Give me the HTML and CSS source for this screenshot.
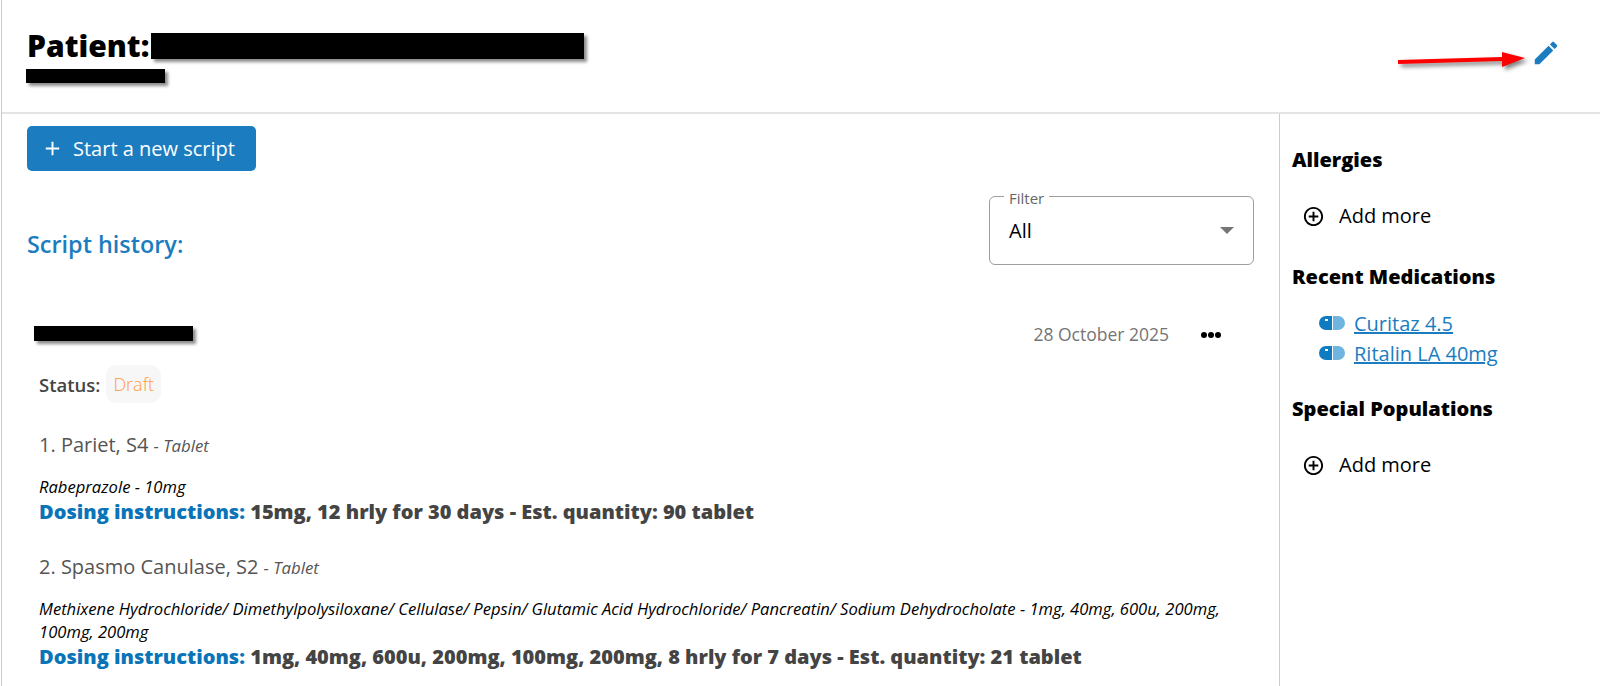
FILE: index.html
```html
<!DOCTYPE html>
<html lang="en">
<head>
    <meta charset="UTF-8">
    <meta name="viewport" content="width=device-width, initial-scale=1.0">
    <title>Patient</title>
    <link rel="stylesheet" href="styles.css">
</head>
<body>
    <div class="page">
        <header class="patient-header">
            <div class="patient-info">
                <h1 class="patient-title">Patient:</h1>
                <p class="patient-sub">Hidden detail</p>
            </div>
            <button class="icon-button" aria-label="Edit">
                <svg class="edit-icon" viewBox="0 0 24 24"><path d="M3 17.25V21h3.75L17.81 9.94l-3.75-3.75L3 17.25zM20.71 7.04c.39-.39.39-1.02 0-1.41l-2.34-2.34c-.39-.39-1.02-.39-1.41 0l-1.83 1.83 3.75 3.75 1.83-1.83z"/></svg>
            </button>
            <!-- redactions and annotation drawn over the screenshot -->
            <div class="redact redact-name"></div>
            <div class="redact redact-sub"></div>
            <svg class="arrow" viewBox="0 0 135 24" width="135" height="24"><path d="M0 11 L104 8 L104 3 L127 9 L104 18 L104 12 L0 15 Z" fill="#f00"/></svg>
        </header>

        <div class="content">
            <main class="main">
                <button class="primary-button">
                    <svg class="plus-icon" viewBox="0 0 24 24"><path d="M19 13h-6v6h-2v-6H5v-2h6V5h2v6h6v2z"/></svg>
                    Start a new script
                </button>

                <div class="history-bar">
                    <h2 class="history-title">Script history:</h2>
                    <fieldset class="filter">
                        <legend>Filter</legend>
                        <span class="filter-value">All</span>
                        <span class="filter-arrow"></span>
                    </fieldset>
                </div>

                <section class="script">
                    <div class="script-top">
                        <span class="script-doctor">Dr. Hidden</span>
                        <span class="script-date">28 October 2025</span>
                        <span class="dots"><i></i><i></i><i></i></span>
                    </div>
                    <div class="redact redact-doctor"></div>
                    <div class="status">
                        <span class="status-label">Status:</span>
                        <span class="status-pill">Draft</span>
                    </div>

                    <div class="drug">
                        <p class="drug-name">1. Pariet, S4 <em>- Tablet</em></p>
                        <p class="drug-ingredients">Rabeprazole - 10mg</p>
                        <p class="dosing"><span>Dosing instructions:</span> 15mg, 12 hrly for 30 days - Est. quantity: 90 tablet</p>
                    </div>

                    <div class="drug">
                        <p class="drug-name">2. Spasmo Canulase, S2 <em>- Tablet</em></p>
                        <p class="drug-ingredients">Methixene Hydrochloride/ Dimethylpolysiloxane/ Cellulase/ Pepsin/ Glutamic Acid Hydrochloride/ Pancreatin/ Sodium Dehydrocholate - 1mg, 40mg, 600u, 200mg, 100mg, 200mg</p>
                        <p class="dosing"><span>Dosing instructions:</span> 1mg, 40mg, 600u, 200mg, 100mg, 200mg, 8 hrly for 7 days - Est. quantity: 21 tablet</p>
                    </div>
                </section>
            </main>

            <aside class="sidebar">
                <h3 class="side-title">Allergies</h3>
                <div class="add-more">
                    <svg class="add-icon" viewBox="0 0 24 24"><path d="M13 7h-2v4H7v2h4v4h2v-4h4v-2h-4V7zm-1-5C6.48 2 2 6.48 2 12s4.48 10 10 10 10-4.48 10-10S17.52 2 12 2zm0 18c-4.41 0-8-3.59-8-8s3.59-8 8-8 8 3.59 8 8-3.59 8-8 8z"/></svg>
                    Add more
                </div>

                <h3 class="side-title side-recent">Recent Medications</h3>
                <ul class="med-list">
                    <li>
                        <svg class="pill-icon" viewBox="0 0 26 14"><path d="M7 0h6v14H7a7 7 0 0 1 0-14z" fill="#0f7cc2"/><path d="M14 0h5a7 7 0 0 1 0 14h-5z" fill="#6fb5e0"/><path d="M6 3h3v2H6z" fill="#fff"/></svg>
                        <a href="#">Curitaz 4.5</a>
                    </li>
                    <li>
                        <svg class="pill-icon" viewBox="0 0 26 14"><path d="M7 0h6v14H7a7 7 0 0 1 0-14z" fill="#0f7cc2"/><path d="M14 0h5a7 7 0 0 1 0 14h-5z" fill="#6fb5e0"/><path d="M6 3h3v2H6z" fill="#fff"/></svg>
                        <a href="#">Ritalin LA 40mg</a>
                    </li>
                </ul>

                <h3 class="side-title side-special">Special Populations</h3>
                <div class="add-more">
                    <svg class="add-icon" viewBox="0 0 24 24"><path d="M13 7h-2v4H7v2h4v4h2v-4h4v-2h-4V7zm-1-5C6.48 2 2 6.48 2 12s4.48 10 10 10 10-4.48 10-10S17.52 2 12 2zm0 18c-4.41 0-8-3.59-8-8s3.59-8 8-8 8 3.59 8 8-3.59 8-8 8z"/></svg>
                    Add more
                </div>
            </aside>
        </div>
    </div>
</body>
</html>
```

FILE: styles.css
```css
* {
    box-sizing: border-box;
}
html, body {
    height: 100%;
}
body {
    margin: 0;
    font-family: 'Open Sans', sans-serif;
    color: #000;
    background: #fff;
    overflow: hidden;
}
p, h1, h2, h3, ul {
    margin: 0;
    padding: 0;
}
.page {
    margin-left: 1px;
    height: 100%;
    border-left: 1px solid #ccc;
}

/* Header */
.patient-header {
    position: relative;
    display: flex;
    justify-content: space-between;
    height: 114px;
    padding: 27px 39px 0 25px;
    border-bottom: 2px solid #e4e4e4;
}
.patient-title {
    font-size: 30px;
    font-weight: 800;
    line-height: 38px;
}
.patient-sub {
    margin-top: 2px;
    font-size: 14px;
    line-height: 20px;
    color: #444;
}
.icon-button {
    width: 30px;
    height: 30px;
    margin-top: 11px;
    padding: 0;
    border: none;
    background: none;
}
.edit-icon {
    display: block;
    width: 30px;
    height: 30px;
    fill: #1b7dc0;
}
.redact {
    position: absolute;
    background: #000;
    box-shadow: 3px 3px 3px rgba(0, 0, 0, 0.45);
}
.redact-name {
    left: 149px;
    top: 33px;
    width: 433px;
    height: 26px;
}
.redact-sub {
    left: 24px;
    top: 69px;
    width: 139px;
    height: 14px;
}
.arrow {
    position: absolute;
    left: 1396px;
    top: 49px;
    filter: drop-shadow(3px 3px 2px rgba(0, 0, 0, 0.5));
}

/* Main column */
.content {
    display: flex;
    height: 572px;
}
.main {
    width: 1278px;
    padding: 12px 25px 0 25px;
    border-right: 1px solid #ccc;
    overflow: hidden;
}
.primary-button {
    display: flex;
    align-items: center;
    gap: 9px;
    width: 229px;
    height: 45px;
    padding: 0 0 0 14px;
    border: none;
    border-radius: 5px;
    background: #1b7dc0;
    color: #fff;
    font-family: inherit;
    font-size: 20px;
}
.plus-icon {
    width: 23px;
    height: 23px;
    fill: #fff;
}
.history-bar {
    display: flex;
    justify-content: space-between;
    align-items: center;
    margin-top: 17px;
}
.history-title {
    margin-top: 35px;
    font-size: 23.4px;
    font-weight: 600;
    color: #1b7dc0;
}
.filter {
    display: flex;
    align-items: center;
    justify-content: space-between;
    width: 265px;
    height: 77px;
    margin: 0;
    padding: 0 19px 8px 19px;
    border: 1px solid #9e9e9e;
    border-radius: 6px;
}
.filter legend {
    margin-left: -5px;
    padding: 3px 5px 0;
    font-size: 15px;
    line-height: 14px;
    color: #666;
}
.filter-value {
    font-size: 20px;
}
.filter-arrow {
    width: 0;
    height: 0;
    border-left: 7px solid transparent;
    border-right: 7px solid transparent;
    border-top: 7px solid #757575;
}

/* Script card */
.script {
    position: relative;
    padding: 0 12px;
}
.script-top {
    display: flex;
    align-items: center;
    margin-top: 55px;
    height: 28px;
}
.script-doctor {
    flex: 1;
    font-weight: 600;
    color: #444;
}
.script-date {
    font-size: 17.5px;
    color: #757575;
}
.dots {
    display: flex;
    gap: 1px;
    margin: 2px 21px 0 32px;
}
.dots i {
    width: 6px;
    height: 6px;
    border-radius: 50%;
    background: #000;
}
.redact-doctor {
    left: 7px;
    top: 6px;
    width: 159px;
    height: 15px;
}
.status {
    display: flex;
    align-items: center;
    gap: 6px;
    margin-top: 17px;
    margin-bottom: 8px;
}
.status-label {
    font-size: 18.5px;
    font-weight: 600;
    color: #444;
}
.status-pill {
    padding: 7px 7px;
    border-radius: 10px;
    background: #f7f7f7;
    color: #ff9a3c;
    font-size: 18px;
    font-weight: 300;
    line-height: 24px;
}
.drug {
    margin-top: 30px;
}
.drug-name {
    font-size: 20px;
    line-height: 24px;
    color: #555;
}
.drug-name em {
    font-size: 16.8px;
}
.drug-ingredients {
    margin-top: 17px;
    font-size: 16.6px;
    line-height: 23px;
    font-style: italic;
}
.dosing {
    margin-top: 1px;
    font-size: 20px;
    font-weight: 800;
    line-height: 26px;
    color: #444;
}
.dosing span {
    color: #0a74b8;
}

/* Sidebar */
.sidebar {
    flex: 1;
    padding: 33px 0 0 12px;
}
.side-title {
    font-size: 20px;
    font-weight: 800;
    line-height: 26px;
}
.add-more {
    display: flex;
    align-items: center;
    gap: 14px;
    margin-top: 30px;
    padding-left: 10px;
    font-size: 20px;
    line-height: 26px;
}
.add-icon {
    width: 23px;
    height: 23px;
}
.side-recent {
    margin-top: 35px;
}
.med-list {
    margin-top: 18px;
    padding-left: 27px;
    list-style: none;
}
.med-list li {
    display: flex;
    align-items: center;
    gap: 9px;
    height: 30px;
    font-size: 20px;
}
.med-list a {
    color: #1b7dc0;
}
.pill-icon {
    width: 26px;
    height: 14px;
}
.side-special {
    margin-top: 28px;
}
```
